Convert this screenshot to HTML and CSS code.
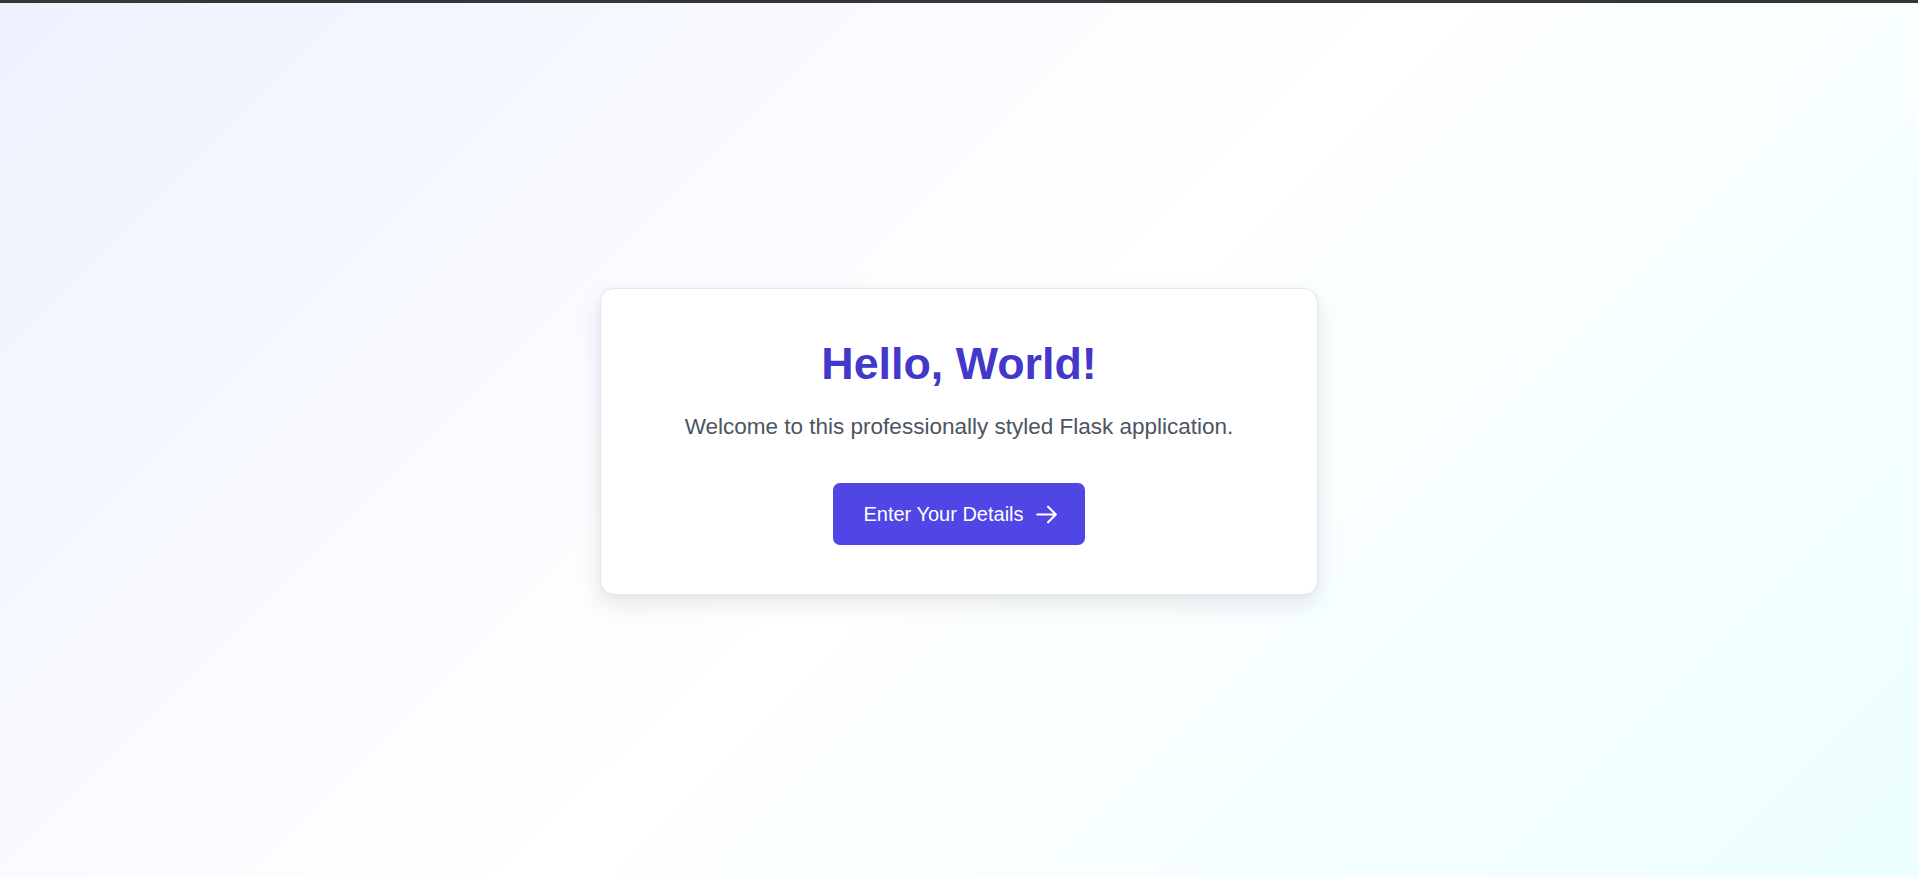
FILE: index.html
```html
<!DOCTYPE html>
<html lang="en">
<head>
<meta charset="utf-8">
<title>Hello, World!</title>
<link rel="stylesheet" href="styles.css">
</head>
<body>
<div class="topbar"></div>
<main class="page">
  <section class="card">
    <h1 class="title">Hello, World!</h1>
    <p class="subtitle">Welcome to this professionally styled Flask application.</p>
    <div class="actions">
      <a class="btn" href="#">
        <span>Enter Your Details</span>
        <svg class="btn-icon" viewBox="0 0 24 24" fill="none" stroke="currentColor" stroke-width="2" stroke-linecap="round" stroke-linejoin="round" aria-hidden="true">
          <path d="M13.5 4.5 21 12l-7.5 7.5M21 12H3"/>
        </svg>
      </a>
    </div>
  </section>
</main>
</body>
</html>
```
FILE: styles.css
```css
* { box-sizing: border-box; }
html, body { margin: 0; padding: 0; }
body {
  font-family: "Liberation Sans", Arial, sans-serif;
  background: linear-gradient(135deg, #eef2ff 0%, #ffffff 50%, #ecfeff 100%);
  min-height: 100vh;
  display: flex;
  flex-direction: column;
}
.topbar {
  height: 3px;
  background: #363636;
  flex: none;
}
.page {
  flex: 1;
  display: flex;
  align-items: center;
  justify-content: center;
  padding-top: 3px;
}
.card {
  width: 718px;
  background: #ffffff;
  border: 1px solid #e5e7eb;
  border-radius: 14px;
  box-shadow: 0 10px 24px rgba(17, 24, 39, 0.09), 0 2px 6px rgba(17, 24, 39, 0.04);
  padding: 48px 32px 49px;
  text-align: center;
}
.title {
  margin: 0 0 19px;
  font-size: 44.8px;
  line-height: 1.2;
  font-weight: 700;
  color: #4338ca;
}
.subtitle {
  margin: 0 0 40px;
  font-size: 22.5px;
  line-height: 1.5;
  color: #4b5563;
}
.actions {
  display: flex;
  justify-content: center;
}
.btn {
  display: flex;
  align-items: center;
  gap: 10px;
  padding: 16px 26px 16px 30px;
  background: #4f46e5;
  color: #ffffff;
  border-radius: 7px;
  font-size: 20px;
  line-height: 1.5;
  text-decoration: none;
}
.btn-icon {
  width: 25px;
  height: 25px;
  display: block;
}
```
